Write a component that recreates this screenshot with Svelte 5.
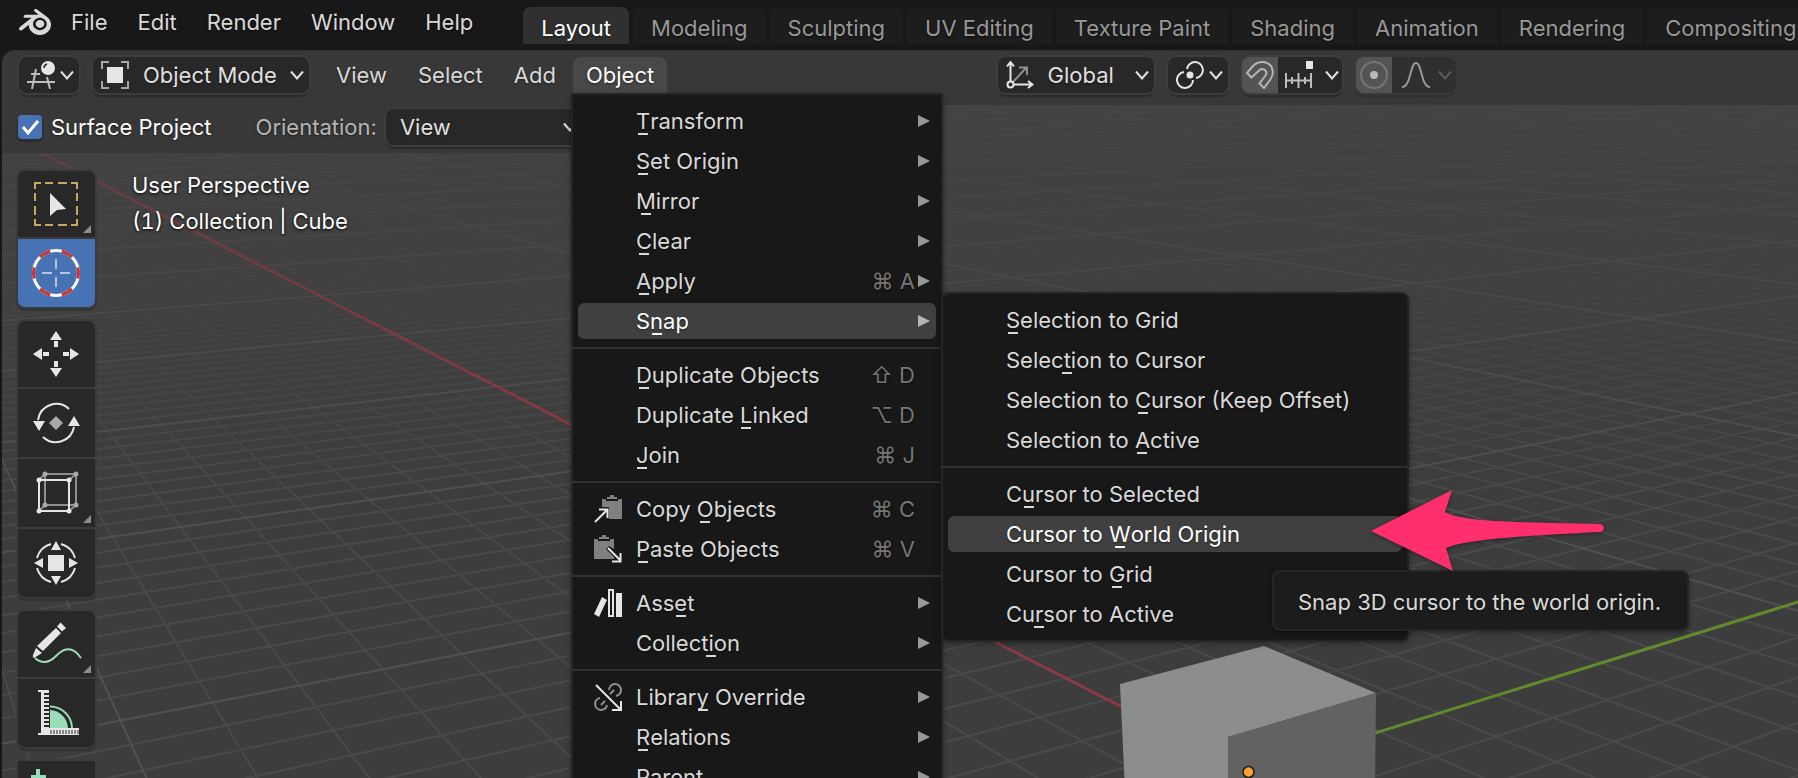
<script>
  const appMenus = ['File', 'Edit', 'Render', 'Window', 'Help'];
  const workspaces = [
    'Layout', 'Modeling', 'Sculpting', 'UV Editing', 'Texture Paint',
    'Shading', 'Animation', 'Rendering', 'Compositing'
  ];
  const viewMenus = ['View', 'Select', 'Add'];

  // Each label marks its accelerator letter with a leading "_".
  const snapMenu = [
    [
      { label: '_Selection to Grid' },
      { label: 'Selec_tion to Cursor' },
      { label: 'Selection to _Cursor (Keep Offset)' },
      { label: 'Selection to _Active' }
    ],
    [
      { label: 'C_ursor to Selected' },
      { label: 'Cursor to _World Origin', active: true },
      { label: 'Cursor to _Grid' },
      { label: 'Cu_rsor to Active' }
    ]
  ];
  const objectMenu = [
    [
      { label: '_Transform', sub: true },
      { label: '_Set Origin', sub: true },
      { label: '_Mirror', sub: true },
      { label: '_Clear', sub: true },
      { label: '_Apply', keys: '⌘ A', sub: true },
      { label: 'S_nap', sub: true, active: true, children: snapMenu }
    ],
    [
      { label: '_Duplicate Objects', keys: '⇧ D' },
      { label: 'Duplicate _Linked', keys: '⌥ D' },
      { label: '_Join', keys: '⌘ J' }
    ],
    [
      { label: 'Copy _Objects', keys: '⌘ C', icon: 'copy' },
      { label: '_Paste Objects', keys: '⌘ V', icon: 'paste' }
    ],
    [
      { label: 'Ass_et', sub: true, icon: 'asset' },
      { label: 'Collect_ion', sub: true }
    ],
    [
      { label: 'Librar_y Override', sub: true, icon: 'override' },
      { label: '_Relations', sub: true },
      { label: '_Parent', sub: true }
    ]
  ];

  const toolGroups = [
    [{ id: 'select', name: 'Select Box', more: true }, { id: 'cursor', name: 'Cursor', on: true }],
    [
      { id: 'move', name: 'Move' },
      { id: 'rotate', name: 'Rotate' },
      { id: 'scale', name: 'Scale', more: true },
      { id: 'transform', name: 'Transform' }
    ],
    [{ id: 'annotate', name: 'Annotate', more: true }, { id: 'measure', name: 'Measure' }],
    [{ id: 'add', name: 'Add Cube' }]
  ];

  function split(label) {
    const i = label.indexOf('_');
    return [label.slice(0, i), label[i + 1], label.slice(i + 2)];
  }

  // Perspective projection of the floor: origin, vanishing points and scale per unit.
  const O = [1249, 772];
  const VX = [-191, 34];
  const VY = [3633, 34];
  const a = 0.0364;
  const b = 0.0289;
  function project(x, y) {
    const A = -a * x;
    const B = b * y;
    const w = 1 + A + B;
    return [0, 1].map((i) => ((VX[i] * A + VY[i] * B + O[i]) / w).toFixed(1));
  }
  function seg(p, q) {
    return 'M' + project(...p).join(' ') + 'L' + project(...q).join(' ');
  }
  // Lines stop just in front of the eye, where w would reach zero.
  const near = 0.12;
  function gridPath(from, to, step, skip) {
    let d = '';
    for (let n = from; n <= to; n += step) {
      if (n === 0 || (skip && n % skip === 0)) continue;
      const y0 = Math.max((near - 1 + a * n) / b, -200);
      d += seg([n, y0], [n, 250]);
      const x0 = Math.min((1 - near + b * n) / a, 200);
      d += seg([x0, n], [-250, n]);
    }
    return d;
  }
  const minor = gridPath(-90, 90, 1, 10);
  const major = gridPath(-200, 200, 10, 0);
  const axisX = seg([20, 0], [-250, 0]);
  const axisY = seg([0, 0], [0, 100]);
</script>

{#snippet chevron()}
  <svg class="chevron" viewBox="0 0 14 10" aria-hidden="true"><path d="M1 1.500l6 7 6-7" /></svg>
{/snippet}

{#snippet menuIcon(name)}
  <svg class="icon" viewBox="0 0 28 28" aria-hidden="true">
    {#if name === 'copy'}
      <path fill="#808080" d="M8 4h4v2h12V4h4v20H15V12H8z" /><path fill="#808080" d="M13 2h3V0h4v2h3v2H13z" />
      <path class="ln" d="M1 27L13 15M5 14.500h8.500V23" />
    {:else if name === 'paste'}
      <path fill="#808080" d="M0 4h4v2h12V4h4v10l-5-3-3 3 8 8v2H0z" /><path fill="#808080" d="M5 2h3V0h4v2h3v2H5z" />
      <path class="ln" d="M14 13l12 12M18 26.500h8.500V18" />
    {:else if name === 'asset'}
      <path fill="#e6e6e6" d="M8 8l5 3-1 2-7 15-5-3zM22 4h6v24h-6z" /><path class="ln" d="M15 1h4v26h-4z" />
    {:else if name === 'override'}
      <g fill="none" stroke="#8f8f8f" stroke-width="2">
        <path d="M15 7a6 6 0 1 1 7 6M20 7l-4 4M6 15a6 6 0 1 0 7 7M7 22l4-4" />
      </g>
      <path class="ln" d="M2 2l24 24M18 27h9v-9" />
    {/if}
  </svg>
{/snippet}

{#snippet menu(groups, kind)}
  <div class="menu {kind}" role="menu">
    {#each groups as group}
      <div class="menu-group">
        {#each group as item}
          {@const t = split(item.label)}
          <div class="menu-row">
            <button class="menu-item" class:active={item.active} role="menuitem">
              <span class="slot">{#if item.icon}{@render menuIcon(item.icon)}{/if}</span>
              <span class="label">{t[0]}<span class="key">{t[1]}</span>{t[2]}</span>
              {#if item.keys}<span class="keys">{item.keys}</span>{/if}
              {#if kind === 'object'}
                <svg class="tri" viewBox="0 0 12 12" aria-hidden="true">{#if item.sub}<path d="M0 0l12 6-12 6z" />{/if}</svg>
              {/if}
            </button>
            {#if item.children}{@render menu(item.children, 'sub')}{/if}
          </div>
        {/each}
      </div>
    {/each}
  </div>
{/snippet}

{#snippet toolIcon(id)}
  <svg class="tool-icon" viewBox="0 0 56 56" aria-hidden="true">
    {#if id === 'select'}
      <path d="M7 13V7h6M43 7h6v6M49 43v6h-6M13 49H7v-6M17 7h8M30 7h9M17 49h8M30 49h9M7 17v8M7 30v9M49 17v8M49 30v9" fill="none" stroke="#cda661" stroke-width="2" />
      <path d="M22 17l16 16-9 1-7 6z" fill="#e6e6e6" />
    {:else if id === 'cursor'}
      <circle cx="28" cy="28" r="22.500" fill="none" stroke="#fff" stroke-width="3" />
      <circle cx="28" cy="28" r="22.500" fill="none" stroke="#d33030" stroke-width="3" pathLength="12" stroke-dasharray="1 1" stroke-dashoffset="0.500" />
      <path d="M28 14v10M28 32v10M14 28h10M32 28h10" stroke="#d6dfee" stroke-width="1.500" />
    {:else if id === 'move'}
      <path fill="#e6e6e6" d="M28 5l6 9H22zM28 51l6-9H22zM5 28l9-6v12zM51 28l-9-6v12zM26 15h4v6h-4zM26 35h4v6h-4zM15 26h6v4h-6zM35 26h6v4h-6z" />
    {:else if id === 'rotate'}
      <path d="M10 25a18.500 18.500 0 0 1 31-11M46 32a18.500 18.500 0 0 1-31 10" fill="none" stroke="#e6e6e6" stroke-width="2" />
      <path d="M5 26h12l-6 10zM46 21l6 10H40z" fill="#e6e6e6" /><path d="M28 21l7 7-7 7-7-7z" fill="#a9a9a9" />
    {:else if id === 'scale'}
      <g fill="none" stroke-width="2"><path d="M17 9h31v31H17zM11 15l6-6M41 15l7-6M41 46l7-6M11 46l6-6" stroke="#8f8f8f" /><path d="M11 15h30v31H11z" stroke="#e6e6e6" /></g>
      <g fill="#a9a9a9"><circle cx="17" cy="9" r="2.500" /><circle cx="48" cy="9" r="2.500" /><circle cx="48" cy="40" r="2.500" /><circle cx="17" cy="40" r="2.500" /></g>
      <g fill="#e6e6e6"><circle cx="11" cy="15" r="2.500" /><circle cx="41" cy="15" r="2.500" /><circle cx="41" cy="46" r="2.500" /><circle cx="11" cy="46" r="2.500" /></g>
    {:else if id === 'transform'}
      <path d="M9 23A20 20 0 0 1 23 9M33 9A20 20 0 0 1 47 23M47 33A20 20 0 0 1 33 47M23 47A20 20 0 0 1 9 33" fill="none" stroke="#e6e6e6" stroke-width="2" />
      <path fill="#e6e6e6" d="M20 20h16v16H20zM28 6l5 9H23zM28 50l5-9H23zM6 28l9-5v10zM50 28l-9-5v10z" />
    {:else if id === 'annotate'}
      <path d="M7 42c9 8 17 2 21-2s14-14 25 2" fill="none" stroke="#98deb9" stroke-width="2" />
      <path fill="#e6e6e6" d="M28 12l5 5-18 18-6-5zM8 32l6 5-8 5q-2-1-1-3z" />
      <path fill="#e6e6e6" d="M29 10.500l3.500-4L38 12l-4 3.500z" />
    {:else if id === 'measure'}
      <path fill="#e6e6e6" d="M10 5h11v3h-5v2h5v2h-5v2h5v2h-5v2h5v2h-5v2h5v2h-5v2h5v2h-5v2h5v2h-5v2h5v2h-5v2h5v2h-5v2h5v1h30v7H10v-2h3V7h-3z" />
      <path d="M23 45v4M26 45v4M29 45v4M32 45v4M35 45v4M38 45v4M41 45v4M44 45v4M47 45v4M50 45v4" stroke="#282828" />
      <path fill="#98deb9" d="M22 25a19 19 0 0 1 18 18H22z" /><path d="M22 21.500a22 22 0 0 1 22 21.500" fill="none" stroke="#98deb9" stroke-width="2" />
    {:else}
      <path fill="#98deb9" d="M8 3h4v6h6v4h-6v6H8v-6H3V9h5z" />
    {/if}
  </svg>
{/snippet}

<div class="app">
  <header class="topbar">
    <svg class="logo" viewBox="0 0 24 24" aria-hidden="true">
      <path d="M12.510 13.214c.046-.8.438-1.506 1.030-2.006a3.424 3.424 0 0 1 2.212-.79c.85 0 1.631.3 2.211.79.592.5.983 1.206 1.028 2.005.045.823-.285 1.586-.865 2.153a3.389 3.389 0 0 1-2.374.938 3.393 3.393 0 0 1-2.376-.938c-.58-.567-.91-1.330-.865-2.152M7.350 14.831c.006.314.106.922.256 1.398a7.372 7.372 0 0 0 1.593 2.757 8.227 8.227 0 0 0 2.787 2.001 8.947 8.947 0 0 0 3.660.76 8.964 8.964 0 0 0 3.657-.772 8.285 8.285 0 0 0 2.785-2.010 7.428 7.428 0 0 0 1.592-2.762 6.964 6.964 0 0 0 .25-3.074 7.123 7.123 0 0 0-1.016-2.779 7.764 7.764 0 0 0-1.852-2.043h.002L13.566 2.550l-.02-.015c-.492-.378-1.319-.376-1.860.002-.547.382-.609 1.015-.123 1.415l-.001.001 3.126 2.543-9.530.010h-.013c-.788.001-1.545.518-1.695 1.172-.154.665.38 1.217 1.200 1.220V8.900l4.830-.010-8.620 6.617-.034.025c-.813.622-1.075 1.658-.563 2.313.52.667 1.625.668 2.447.004L7.414 14s-.069.520-.063.831zm12.090 1.741c-.970.988-2.326 1.548-3.795 1.550-1.470.004-2.827-.552-3.797-1.538a4.510 4.510 0 0 1-1.036-1.622 4.282 4.282 0 0 1 .282-3.519 4.702 4.702 0 0 1 1.153-1.371c.942-.768 2.141-1.183 3.396-1.185 1.256-.002 2.455.410 3.398 1.175.480.391.870.854 1.152 1.367a4.280 4.280 0 0 1 .522 1.706 4.236 4.236 0 0 1-.239 1.811 4.540 4.540 0 0 1-1.035 1.626" />
    </svg>
    <nav class="app-menus">
      {#each appMenus as name}<button>{name}</button>{/each}
    </nav>
    <div class="tabs" role="tablist">
      {#each workspaces as name, i}
        <button class="tab" role="tab" aria-selected={i === 0}>{name}</button>
      {/each}
    </div>
  </header>

  <main class="area">
    <svg class="scene" viewBox="0 51 1798 727" preserveAspectRatio="xMinYMin slice" aria-hidden="true">
      <defs>
        <linearGradient id="floor" x1="0" y1="51" x2="0" y2="778" gradientUnits="userSpaceOnUse">
          <stop offset="0" stop-color="#434343" /><stop offset=".35" stop-color="#404040" /><stop offset=".6" stop-color="#3d3d3d" /><stop offset="1" stop-color="#3d3d3d" />
        </linearGradient>
        <linearGradient id="cubeSide" x1="0" y1="690" x2="0" y2="790" gradientUnits="userSpaceOnUse">
          <stop offset="0" stop-color="#8b8d8e" /><stop offset=".6" stop-color="#8a8d8b" />
        </linearGradient>
        <linearGradient id="fadeMinor" x1="0" y1="51" x2="0" y2="778" gradientUnits="userSpaceOnUse">
          <stop offset=".16" stop-color="#fff" stop-opacity="0" /><stop offset=".34" stop-color="#fff" stop-opacity=".25" /><stop offset=".6" stop-color="#fff" stop-opacity=".9" /><stop offset="1" stop-color="#fff" />
        </linearGradient>
        <linearGradient id="fadeMajor" x1="0" y1="51" x2="0" y2="778" gradientUnits="userSpaceOnUse">
          <stop offset=".05" stop-color="#fff" stop-opacity=".1" /><stop offset=".25" stop-color="#fff" stop-opacity=".3" /><stop offset=".6" stop-color="#fff" stop-opacity=".9" /><stop offset="1" stop-color="#fff" />
        </linearGradient>
        <linearGradient id="fadeAxis" x1="0" y1="0" x2="700" y2="0" gradientUnits="userSpaceOnUse">
          <stop offset="0" stop-color="#fff" stop-opacity="0" /><stop offset=".1" stop-color="#fff" stop-opacity=".45" /><stop offset="1" stop-color="#fff" />
        </linearGradient>
        <mask id="mMinor" maskUnits="userSpaceOnUse" x="0" y="51" width="1798" height="727"><rect y="51" width="1798" height="727" fill="url(#fadeMinor)" /></mask>
        <mask id="mMajor" maskUnits="userSpaceOnUse" x="0" y="51" width="1798" height="727"><rect y="51" width="1798" height="727" fill="url(#fadeMajor)" /></mask>
        <mask id="mAxis" maskUnits="userSpaceOnUse" x="0" y="51" width="1798" height="727"><rect y="51" width="1798" height="727" fill="url(#fadeAxis)" /></mask>
      </defs>
      <rect y="51" width="1798" height="727" fill="url(#floor)" />
      <g fill="none" stroke-width="2">
        <path d={minor} stroke="#4a4a4a" mask="url(#mMinor)" />
        <path d={major} stroke="#525252" mask="url(#mMajor)" />
        <path d={axisX} stroke="#8b3a44" stroke-width="3" mask="url(#mAxis)" />
        <path d={axisY} stroke="#618a2b" stroke-width="3" />
      </g>
      <path fill="url(#cubeSide)" d="M1120 684L1264 646L1376 693L1228 737V790H1125z" />
      <path fill="#626262" d="M1228 737L1376 693L1375 790H1228z" />
      <circle cx="1248.500" cy="772" r="5.500" fill="#ffa02f" stroke="#1a1a1a" stroke-width="1.500" />
    </svg>

    <div class="header">
      <button class="field editor" aria-label="Editor Type">
        <svg viewBox="0 0 28 28" class="icon" aria-hidden="true">
          <g stroke="#bdbdbd" stroke-width="2" fill="none"><path d="M0 21h28M4 13h9M9 8L5 28M20 16l3 12" /></g>
          <circle cx="21" cy="7" r="7" fill="#e6e6e6" /><path d="M17 7q0-3 3-4" stroke="#282828" stroke-width="1.500" fill="none" />
        </svg>
        {@render chevron()}
      </button>
      <label class="field mode">
        <svg viewBox="0 0 28 28" class="icon" aria-hidden="true">
          <path d="M1 8V1h7M20 1h7v7M27 20v7h-7M8 27H1v-7" fill="none" stroke="#a6a6a6" stroke-width="2" /><path d="M6 6h16v16H6z" fill="#e6e6e6" />
        </svg>
        <select aria-label="Mode"><option>Object Mode</option></select>
        {@render chevron()}
      </label>
      <nav class="view-menus">
        {#each viewMenus as name}<button>{name}</button>{/each}
        <div class="open-menu">
          <button class="opened" aria-haspopup="menu" aria-expanded="true">Object</button>
          {@render menu(objectMenu, 'object')}
        </div>
      </nav>
      <div class="center">
        <label class="field orient">
          <svg viewBox="0 0 28 28" class="icon" aria-hidden="true">
            <path d="M7 21L20 7M13 6.500h8V14" fill="none" stroke="#8f8f8f" stroke-width="2" />
            <path class="ln" d="M4.500 20V2M1 5.500L4.500 1 8 5.500M8 23.500h17M22 20l4.500 3.500L22 27" /><circle class="ln" cx="4.500" cy="23.500" r="3" />
          </svg>
          <select aria-label="Transform Orientation"><option>Global</option></select>
          {@render chevron()}
        </label>
        <button class="field pivot" aria-label="Pivot Point">
          <svg viewBox="0 0 28 28" class="icon" aria-hidden="true">
            <path class="ln" d="M11 8A8 8 0 1 1 20 17M17 19A8 8 0 1 1 8 11" /><circle cx="14" cy="14" r="3.500" fill="#e6e6e6" />
          </svg>
          {@render chevron()}
        </button>
        <div class="pair">
          <button class="toggle" aria-label="Snap">
            <svg viewBox="0 0 28 28" class="icon" aria-hidden="true"><path d="M1 12L7 5C13-1 22 0 25.500 6 28 11 27 15 24 19l-6 8-4.500-4.500 6-8C22 11 18 6 13.500 9L5.500 16.500z" fill="none" stroke="#b5b5b5" stroke-width="2" /></svg>
          </button>
          <button class="part" aria-label="Snap To">
            <svg viewBox="0 0 28 28" class="icon" aria-hidden="true"><path d="M21 0h7v8h-7z" fill="#e6e6e6" /><path d="M1 12v15M13.500 12v15M26 12v15M1 19.500h25M7 16v7M20 16v7" stroke="#bdbdbd" stroke-width="2" fill="none" /></svg>
            {@render chevron()}
          </button>
        </div>
        <div class="pair off">
          <button class="toggle" aria-label="Proportional Editing">
            <svg viewBox="0 0 28 28" class="icon" aria-hidden="true"><circle cx="14" cy="14" r="13" fill="none" stroke="#757575" stroke-width="2" /><circle cx="14" cy="14" r="4" fill="#b8b8b8" /></svg>
          </button>
          <button class="part" aria-label="Falloff">
            <svg viewBox="0 0 28 28" class="icon" aria-hidden="true"><path d="M0 26C9 26 8 2 14 2s5 24 14 24" fill="none" stroke="#999" stroke-width="2" /></svg>
            {@render chevron()}
          </button>
        </div>
      </div>
    </div>

    <div class="tool-settings">
      <label class="check">
        <span class="box">
          <input type="checkbox" checked />
          <svg viewBox="0 0 24 24" aria-hidden="true"><path d="M5 12l5 6L20 6" fill="none" stroke="#fff" stroke-width="3" /></svg>
        </span>
        Surface Project
      </label>
      <label class="orientation">
        <span>Orientation:</span>
        <span class="field view">
          <select><option>View</option></select>
          {@render chevron()}
        </span>
      </label>
    </div>

    <div class="viewport">
      <div class="toolbar">
        {#each toolGroups as group}
          <div class="tool-group">
            {#each group as tool}
              <button class="tool" class:on={tool.on} aria-label={tool.name}>
                {@render toolIcon(tool.id)}
                {#if tool.more}<span class="corner"></span>{/if}
              </button>
            {/each}
          </div>
        {/each}
      </div>
      <div class="info">
        <div>User Perspective</div>
        <div>(1) Collection | Cube</div>
      </div>
    </div>
  </main>

  <div class="tooltip" role="tooltip">Snap 3D cursor to the world origin.</div>
  <svg class="pointer" viewBox="0 0 234 82" aria-hidden="true">
    <path d="M0 41L81 0L74 22C92 32 140 32 229 34Q233 35 233 38T229 42C150 46 95 49 75 58L82 81z" />
  </svg>
</div>

<style>
  :global(body) { margin: 0; background: #181818; }
  .app {
    position: relative; display: flex; flex-direction: column; height: 100vh; overflow: hidden;
    background: #181818; color: #d9d9d9; font: 22px/24px Inter, sans-serif;
    text-shadow: 0 1px 2px rgba(0, 0, 0, 0.5);
  }
  button, select, input { margin: 0; padding: 0; border: 0; background: none; color: inherit; font: inherit; text-shadow: inherit; white-space: nowrap; }
  select { appearance: none; flex: 1; min-width: 0; outline: 0; }
  .icon { display: block; flex: none; width: 28px; height: 28px; }
  .icon .ln { fill: none; stroke: #e6e6e6; stroke-width: 2; }
  .chevron { flex: none; width: 14px; height: 10px; }
  .chevron path { fill: none; stroke: #e0e0e0; stroke-width: 2; }

  .topbar { flex: none; display: flex; height: 44px; padding-left: 19px; margin-bottom: 6px; }
  .logo { flex: none; width: 32px; height: 44px; fill: #d9d9d9; }
  .app-menus { display: flex; flex: none; gap: 30px; padding: 0 50px 0 20px; }
  .tabs { display: flex; gap: 4px; padding-top: 7px; }
  .tab { height: 37px; padding: 4px 18px 0; border-radius: 8px 8px 0 0; background: #1d1d1d; color: #989898; }
  .tab[aria-selected='true'] { background: #303030; color: #fff; }

  .area { position: relative; flex: 1; min-height: 0; margin-left: 2px; border-top: 1px solid #303030; border-radius: 12px 0 0 0; }
  .scene { position: absolute; top: 0; left: -2px; width: calc(100% + 2px); height: 100%; clip-path: inset(0 0 0 2px round 12px 0 0 0); }
  .header {
    position: relative; z-index: 2; display: flex; align-items: center; height: 36px; padding: 6px 12px 12px 17px;
    background: rgba(54, 54, 54, 0.85); border-radius: 12px 0 0 0;
  }
  .field { display: flex; align-items: center; box-sizing: border-box; height: 36px; padding: 0 5px 0 8px; border-radius: 8px; background: #282828; color: #e0e0e0; box-shadow: 0 0 0 2px #3d3d3d, 0 3px 1px 1px #2c2c2c; }
  .editor { width: 60px; gap: 5px; margin-right: 14px; }
  .mode { width: 216px; gap: 14px; }
  .view-menus { display: flex; align-items: center; gap: 31px; padding-left: 27px; }
  .open-menu { position: relative; margin-left: -14px; }
  .opened { display: block; height: 36px; padding: 0 13px; border-radius: 8px 8px 0 0; background: #484848; color: #fff; }
  .center { display: flex; gap: 14px; margin: 0 auto; }
  .orient { width: 156px; gap: 14px; }
  .pivot { width: 60px; gap: 5px; }
  .pair { display: flex; width: 100px; height: 36px; border-radius: 8px; background: #282828; box-shadow: 0 0 0 2px #3d3d3d, 0 3px 1px 1px #2c2c2c; }
  .toggle { padding: 0 4px; border-radius: 8px 0 0 8px; background: #545454; margin-right: 2px; }
  .part { display: flex; flex: 1; align-items: center; gap: 12px; padding-left: 5px; }
  .pair.off { background: #2f2f2f; box-shadow: 0 0 0 2px #3a3a3a, 0 3px 1px 1px #303030; }
  .off .part { gap: 8px; padding-left: 8px; }
  .off .chevron { opacity: 0.25; }

  .tool-settings {
    position: relative; display: flex; align-items: center; width: 36%; height: 36px; padding: 4px 0 8px 16px;
    background: rgba(54, 54, 54, 0.85);
  }
  .check { display: flex; align-items: center; gap: 9px; color: #fff; white-space: nowrap; }
  .box { display: grid; width: 24px; height: 24px; }
  .box > * { grid-area: 1 / 1; width: 24px; height: 24px; }
  .box svg { pointer-events: none; }
  .box input { appearance: none; border-radius: 4px; background: #4772b3; box-shadow: 0 2px 1px 1px #2d2d2d; }
  .orientation { display: flex; align-items: center; gap: 9px; margin-left: 44px; color: #b5b5b5; }
  .view { width: 196px; padding-left: 14px; }

  .viewport { position: relative; display: flex; align-items: flex-start; gap: 37px; padding: 18px 0 0 16px; }
  .toolbar { display: flex; flex-direction: column; gap: 14px; width: 77px; }
  .tool-group { display: flex; flex-direction: column; gap: 2px; border-radius: 7px; background: #3b3b3b; box-shadow: 0 0 0 2px #3b3b3b, 0 3px 1px 1px #333; }
  .tool { position: relative; display: grid; place-items: center; box-sizing: border-box; height: 68px; padding-right: 2px; background: #282828; }
  .tool:first-child { height: 66px; border-radius: 7px 7px 0 0; }
  .tool:last-child { border-radius: 0 0 7px 7px; }
  .tool.on { background: #4772b3; }
  .tool-icon { width: 56px; height: 56px; }
  .corner { position: absolute; right: 4px; bottom: 4px; border: 4px solid #8c8c8c; border-top-color: transparent; border-left-color: transparent; }
  .info { display: flex; flex-direction: column; gap: 12px; padding-top: 2px; color: #fff; text-shadow: 0 1px 3px #000; font-variant-numeric: tabular-nums; }

  .menu { position: absolute; border: 2px solid #242424; background: #181818; padding: 6px 0; box-shadow: 0 2px 6px rgba(0, 0, 0, 0.35); }
  .menu.object { top: 100%; left: -2px; width: 368px; }
  .menu.sub { top: -9px; left: 368px; width: 464px; border-radius: 8px; z-index: 1; }
  .menu-group + .menu-group { position: relative; padding-top: 14px; }
  .menu-group + .menu-group::before { content: ''; position: absolute; top: 6px; left: -2px; right: 0; height: 2px; background: #303030; }
  .menu-row { position: relative; padding: 2px 5px; }
  .menu-item { display: flex; align-items: center; width: 100%; height: 36px; padding: 0 6px 0 16px; border-radius: 6px; color: #d9d9d9; text-align: left; }
  .menu-item.active { background: #404040; color: #fff; }
  .slot { flex: none; width: 42px; }
  .label { flex: 1; }
  .key { position: relative; }
  .key::after { content: ''; position: absolute; left: 50%; bottom: -1px; width: 10px; height: 2px; margin-left: -5px; background: currentColor; }
  .keys { color: #757575; margin-right: 3px; }
  .tri { flex: none; width: 12px; height: 12px; fill: #989898; }
  .active .tri { fill: #b5b5b5; }

  .tooltip { position: absolute; z-index: 3; left: 1272px; top: 570px; padding: 18px 26px 15px 24px; border: 2px solid #252525; border-radius: 8px; background: #1c1c1c; white-space: nowrap; box-shadow: 0 2px 5px rgba(0, 0, 0, 0.35); }
  .pointer { position: absolute; z-index: 4; left: 1371px; top: 490px; width: 234px; height: 82px; fill: #ff2f6d; overflow: visible; filter: drop-shadow(0 1px 2px rgba(0, 0, 0, 0.4)); }
</style>
